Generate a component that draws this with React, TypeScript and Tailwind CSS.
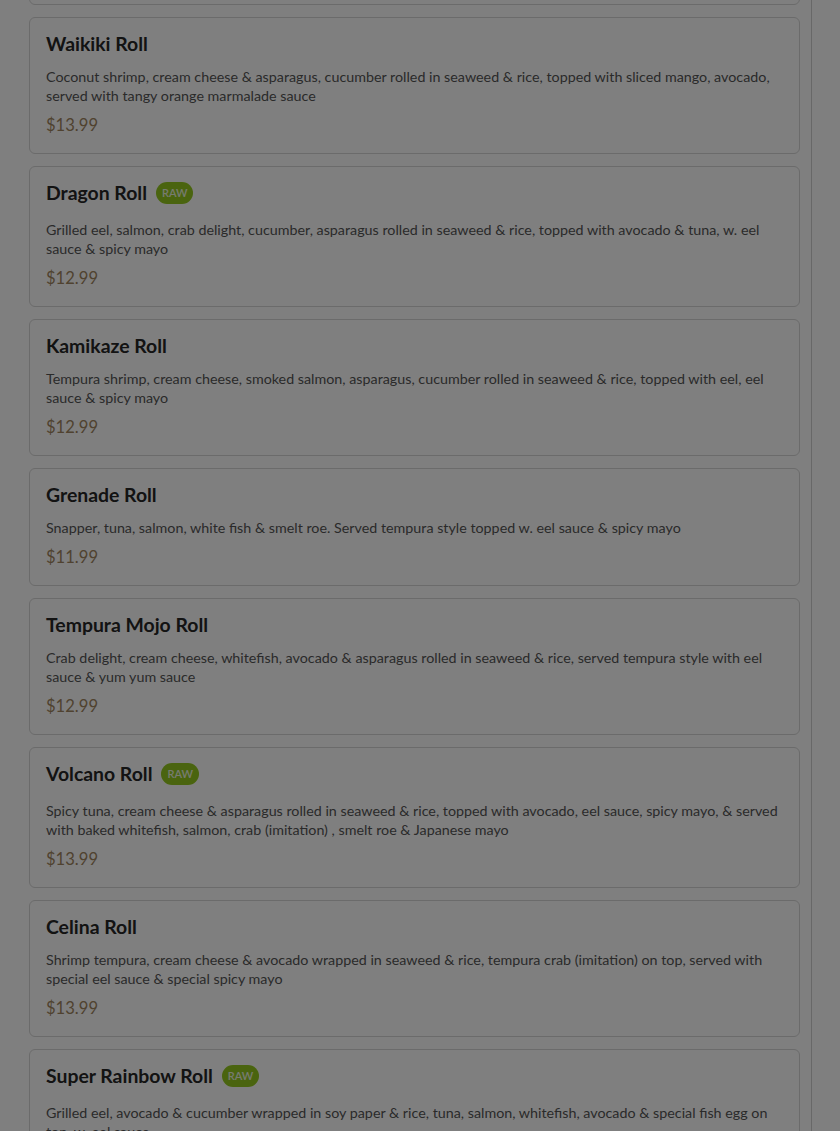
import React from "react"

interface MenuItem {
  name: string
  description: string
  price: string
  raw?: boolean
}

const items: MenuItem[] = [
  {
    name: "Rock N Roll",
    description:
      "Shrimp tempura, crab delight, cucumber & avocado rolled in seaweed & rice, topped with spicy tuna, eel sauce, spicy mayo & crunch flakes",
    price: "$12.99",
  },
  {
    name: "Waikiki Roll",
    description:
      "Coconut shrimp, cream cheese & asparagus, cucumber rolled in seaweed & rice, topped with sliced mango, avocado, served with tangy orange marmalade sauce",
    price: "$13.99",
  },
  {
    name: "Dragon Roll",
    description:
      "Grilled eel, salmon, crab delight, cucumber, asparagus rolled in seaweed & rice, topped with avocado & tuna, w. eel sauce & spicy mayo",
    price: "$12.99",
    raw: true,
  },
  {
    name: "Kamikaze Roll",
    description:
      "Tempura shrimp, cream cheese, smoked salmon, asparagus, cucumber rolled in seaweed & rice, topped with eel, eel sauce & spicy mayo",
    price: "$12.99",
  },
  {
    name: "Grenade Roll",
    description: "Snapper, tuna, salmon, white fish & smelt roe. Served tempura style topped w. eel sauce & spicy mayo",
    price: "$11.99",
  },
  {
    name: "Tempura Mojo Roll",
    description:
      "Crab delight, cream cheese, whitefish, avocado & asparagus rolled in seaweed & rice, served tempura style with eel sauce & yum yum sauce",
    price: "$12.99",
  },
  {
    name: "Volcano Roll",
    description:
      "Spicy tuna, cream cheese & asparagus rolled in seaweed & rice, topped with avocado, eel sauce, spicy mayo, & served with baked whitefish, salmon, crab (imitation) , smelt roe & Japanese mayo",
    price: "$13.99",
    raw: true,
  },
  {
    name: "Celina Roll",
    description:
      "Shrimp tempura, cream cheese & avocado wrapped in seaweed & rice, tempura crab (imitation) on top, served with special eel sauce & special spicy mayo",
    price: "$13.99",
  },
  {
    name: "Super Rainbow Roll",
    description:
      "Grilled eel, avocado & cucumber wrapped in soy paper & rice, tuna, salmon, whitefish, avocado & special fish egg on top, w. eel sauce",
    price: "$15.99",
    raw: true,
  },
]

function MenuCard({ item }: { item: MenuItem }) {
  return (
    <div className="rounded-md border border-[#d6d6d6] bg-white px-4 pt-4 pb-4">
      <div className={`flex items-start gap-[9px] ${item.raw ? "h-6" : "h-5"}`}>
        <h3 className="text-[19.4px] leading-5 font-bold text-[#262626]">{item.name}</h3>
        {item.raw && (
          <span className="-mt-px flex h-[22px] items-center rounded-full bg-[#94c91f] px-[6px] text-[11px] font-semibold uppercase text-[#eef6e0]">
            Raw
          </span>
        )}
      </div>
      <p className="mt-[13px] text-[14.3px] leading-[19px] text-[#555555]">{item.description}</p>
      <div className="mt-2 text-[16.6px] leading-6 text-[#a08560]">{item.price}</div>
    </div>
  )
}

export default function App() {
  return (
    <div className="relative h-[1131px] overflow-hidden bg-white" style={{ fontFamily: "Lato, 'Noto Sans', sans-serif" }}>
      <div className="flex h-full">
        <div className="w-[812px] border-r border-[#d0d0d0] pl-[29px] pr-[11px]">
          <div className="-mt-[132px] flex flex-col gap-3">
            {items.map((item) => (
              <MenuCard key={item.name} item={item} />
            ))}
          </div>
        </div>
        <div className="flex-1 bg-white" />
      </div>
      <div className="fixed inset-0 bg-black/50" />
    </div>
  )
}
